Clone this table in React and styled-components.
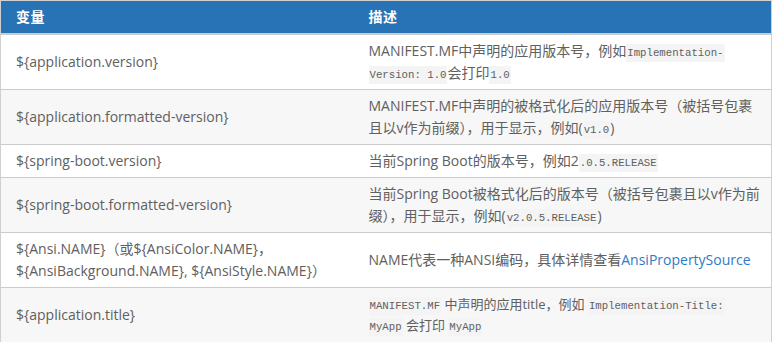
import React from 'react';
import styled, { createGlobalStyle } from 'styled-components';

const GlobalStyle = createGlobalStyle`
	html, body {
		margin: 0;
		padding: 0;
		background: #fff;
	}
	body {
		font-family: "Open Sans", "Noto Sans CJK SC", sans-serif;
	}
`;

const Table = styled.table`
	width: 772px;
	border-collapse: collapse;
	border: 1px solid #d0d0d0;
	border-bottom: none;
	table-layout: fixed;
	font-size: 14px;
	line-height: 22px;
	color: #606060;
`;

const HeadRow = styled.tr`
	background: #2773b6;
	border-bottom: 2px solid #cccccc;
`;

const HeadCell = styled.th`
	padding: 5px 15px;
	text-align: left;
	color: #ffffff;
	font-weight: 700;
	letter-spacing: 0.5px;
`;

const Row = styled.tr`
	background: ${(props) => (props.$striped ? '#f7f7f7' : '#ffffff')};
	border-bottom: ${(props) => (props.$last ? 'none' : '1px solid #cccccc')};
`;

const Cell = styled.td`
	height: ${(props) => props.$height}px;
	padding: 0 15px;
	vertical-align: middle;
	white-space: nowrap;
	font-size: ${(props) => (props.$small ? '13px' : '14px')};
	line-height: ${(props) => (props.$small ? '21px' : '22px')};
`;

const Code = styled.code`
	font-family: "Liberation Mono", "DejaVu Sans Mono", monospace;
	font-size: 10.7px;
	line-height: 1;
	background: #f4f4f4;
	color: #606060;
	padding: 3px 1px;
`;

const Link = styled.a`
	color: #2d7bc4;
	text-decoration: none;
`;

const rows = [
	{
		name: '${application.version}',
		desc: (
			<>
				MANIFEST.MF中声明的应用版本号，例如<Code>Implementation-</Code>
				<br />
				<Code>Version: 1.0</Code>会打印<Code>1.0</Code>
			</>
		)
	},
	{
		name: '${application.formatted-version}',
		desc: (
			<>
				MANIFEST.MF中声明的被格式化后的应用版本号（被括号包裹
				<br />
				且以v作为前缀），用于显示，例如(<Code>v1.0</Code>)
			</>
		)
	},
	{
		name: '${spring-boot.version}',
		lines: 1,
		desc: (
			<>
				当前Spring Boot的版本号，例如2<Code>.0.5.RELEASE</Code>
			</>
		)
	},
	{
		name: '${spring-boot.formatted-version}',
		desc: (
			<>
				当前Spring Boot被格式化后的版本号（被括号包裹且以v作为前
				<br />
				缀），用于显示，例如(<Code>v2.0.5.RELEASE</Code>)
			</>
		)
	},
	{
		name: (
			<>
				{'${Ansi.NAME}（或${AnsiColor.NAME}，'}
				<br />
				{'${AnsiBackground.NAME}, ${AnsiStyle.NAME}）'}
			</>
		),
		desc: (
			<>
				NAME代表一种ANSI编码，具体详情查看<Link href="#">AnsiPropertySource</Link>
			</>
		)
	},
	{
		name: '${application.title}',
		small: true,
		desc: (
			<>
				<Code>MANIFEST.MF</Code> 中声明的应用title，例如 <Code>Implementation-Title:</Code>
				<br />
				<Code>MyApp</Code> 会打印 <Code>MyApp</Code>
			</>
		)
	}
];

export default function App() {
	return (
		<>
			<GlobalStyle />
			<Table>
				<colgroup>
					<col style={{ width: '353px' }} />
					<col />
				</colgroup>
				<thead>
					<HeadRow>
						<HeadCell>变量</HeadCell>
						<HeadCell>描述</HeadCell>
					</HeadRow>
				</thead>
				<tbody>
					{rows.map((row, i) => {
						const height = row.lines === 1 ? 32 : 54;
						return (
							<Row key={i} $striped={i % 2 === 1} $last={i === rows.length - 1}>
								<Cell $height={height}>{row.name}</Cell>
								<Cell $height={height} $small={row.small}>{row.desc}</Cell>
							</Row>
						);
					})}
				</tbody>
			</Table>
		</>
	);
}
